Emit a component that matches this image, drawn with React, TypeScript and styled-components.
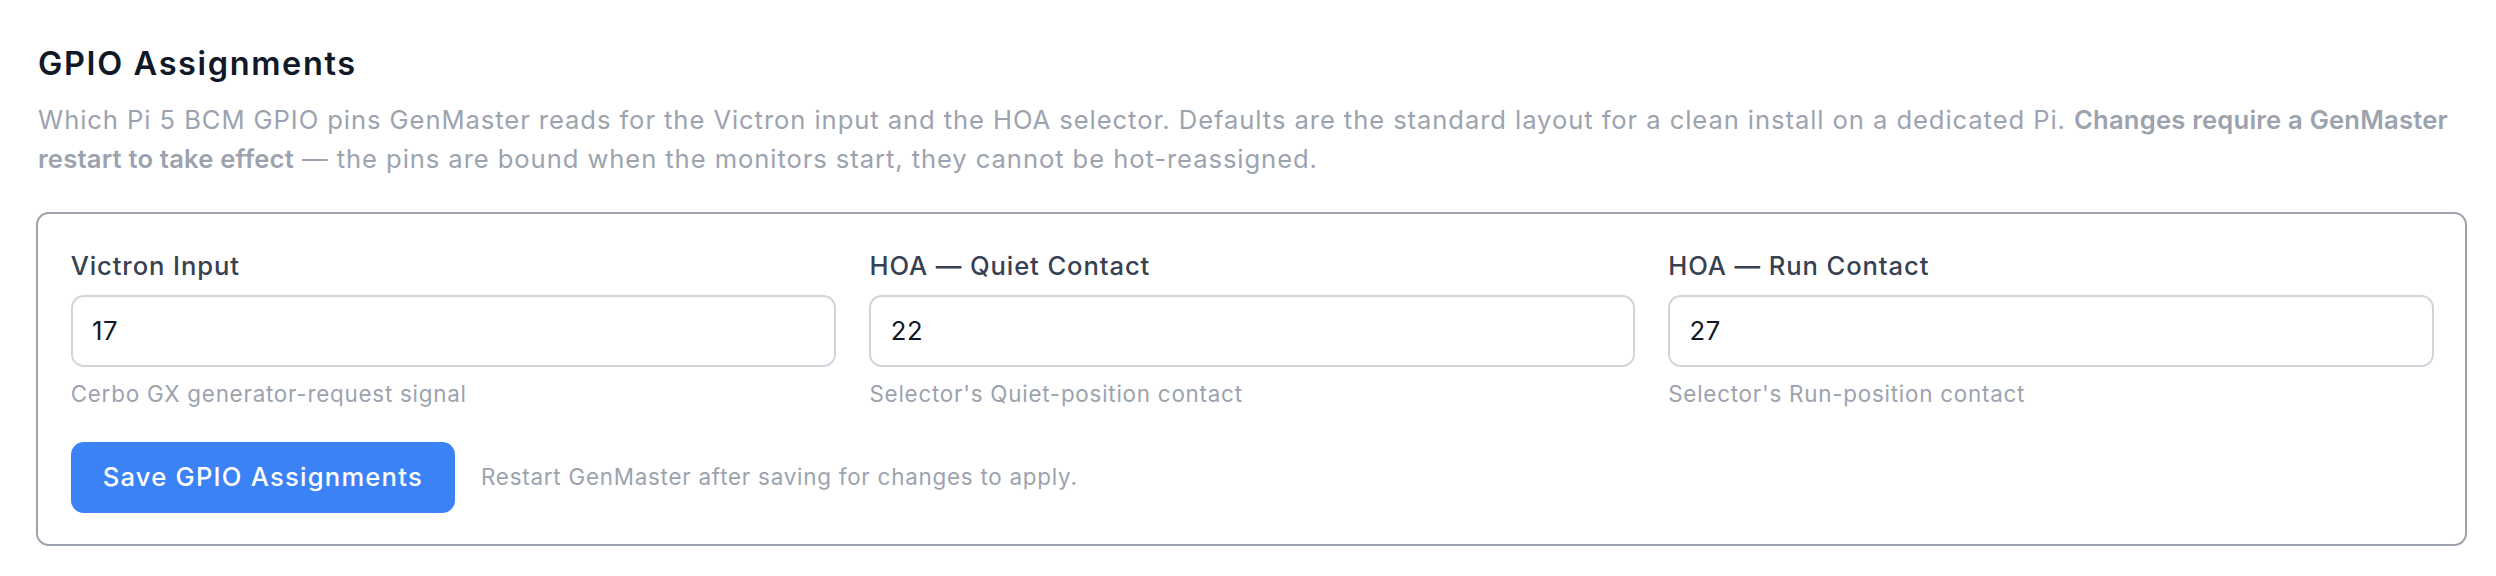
import React from "react";
import styled, { createGlobalStyle } from "styled-components";

const GlobalStyle = createGlobalStyle`
  html, body {
    margin: 0;
    padding: 0;
    background: #ffffff;
  }
  body {
    font-family: Inter, "Noto Sans", "Liberation Sans", sans-serif;
    -webkit-font-smoothing: antialiased;
  }
  * { box-sizing: border-box; }
`;

const Page = styled.div`
  padding: 42px 29px 30px 36px;
  display: flex;
  flex-direction: column;
`;

const Title = styled.h2`
  margin: 0 0 14.7px 2px;
  font-size: 32.5px;
  line-height: 44.8px;
  font-weight: 600;
  letter-spacing: 0.05em;
  color: #111827;
`;

const Description = styled.p`
  margin: 0 0 34px 2px;
  font-size: 25.6px;
  line-height: 38.4px;
  letter-spacing: 0.036em;
  color: #9ca3af;
`;

const Emphasis = styled.strong`
  font-weight: 600;
  letter-spacing: 0.008em;
`;

const Card = styled.section`
  border: 2px solid #9ca3af;
  border-radius: 12.8px;
  padding: 32.8px 31px 30.7px 32.7px;
  display: flex;
  flex-direction: column;
  gap: 32px;
`;

const FieldGrid = styled.div`
  display: grid;
  grid-template-columns: repeat(3, 1fr);
  column-gap: 33px;
`;

const Field = styled.div`
  display: flex;
  flex-direction: column;
`;

const Label = styled.label`
  font-size: 25.6px;
  line-height: 38.4px;
  font-weight: 500;
  letter-spacing: 0.035em;
  color: #374151;
  margin-bottom: 9px;
`;

const Input = styled.input`
  font-family: inherit;
  font-size: 25.6px;
  line-height: 38.4px;
  letter-spacing: 0.03em;
  color: #111827;
  padding: 15.3px 19.2px;
  border: 2px solid #d1d5db;
  border-radius: 12.8px;
  background: #ffffff;
  outline: none;
  width: 100%;
`;

const Help = styled.span`
  margin-top: 10.5px;
  font-size: 22.4px;
  line-height: 32px;
  letter-spacing: 0.034em;
  color: #9ca3af;
`;

const Actions = styled.div`
  display: flex;
  align-items: center;
  gap: 26px;
`;

const SaveButton = styled.button`
  font-family: inherit;
  font-size: 25.6px;
  line-height: 38.4px;
  font-weight: 500;
  letter-spacing: 0.048em;
  color: #ffffff;
  background: #3b82f6;
  border: none;
  border-radius: 12.8px;
  padding: 16.3px 32px;
  cursor: pointer;
`;

const Hint = styled.span`
  font-size: 22.4px;
  line-height: 32px;
  letter-spacing: 0.034em;
  color: #9ca3af;
`;

const fields = [
  { label: "Victron Input", value: "17", help: "Cerbo GX generator-request signal" },
  { label: "HOA — Quiet Contact", value: "22", help: "Selector's Quiet-position contact" },
  { label: "HOA — Run Contact", value: "27", help: "Selector's Run-position contact" },
];

export default function App() {
  return (
    <>
      <GlobalStyle />
      <Page>
        <Title>GPIO Assignments</Title>
        <Description>
          Which Pi 5 BCM GPIO pins GenMaster reads for the Victron input and the HOA selector. Defaults are the
          standard layout for a clean install on a dedicated Pi.{" "}
          <Emphasis>Changes require a GenMaster restart to take effect</Emphasis> — the pins are bound when the
          monitors start, they cannot be hot-reassigned.
        </Description>
        <Card>
          <FieldGrid>
            {fields.map((f) => (
              <Field key={f.label}>
                <Label>{f.label}</Label>
                <Input type="text" defaultValue={f.value} />
                <Help>{f.help}</Help>
              </Field>
            ))}
          </FieldGrid>
          <Actions>
            <SaveButton type="button">Save GPIO Assignments</SaveButton>
            <Hint>Restart GenMaster after saving for changes to apply.</Hint>
          </Actions>
        </Card>
      </Page>
    </>
  );
}
